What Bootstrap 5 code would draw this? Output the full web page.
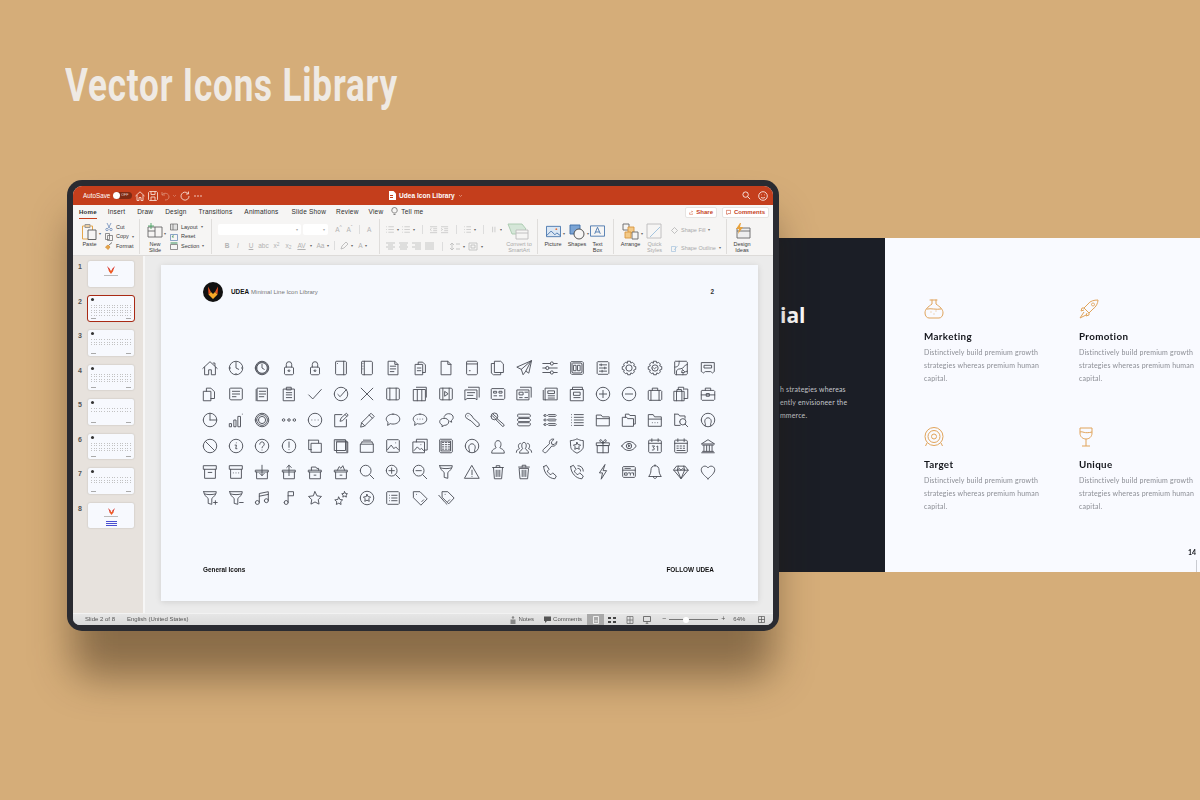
<!DOCTYPE html>
<html lang="en">
<head>
<meta charset="UTF-8">
<title>Vector Icons Library</title>
<link rel="stylesheet" href="https://cdn.jsdelivr.net/npm/bootstrap@5.3.0/dist/css/bootstrap.min.css">
<style>
html, body { margin: 0; height: 800px; overflow: hidden; }
body { background: #d5ad79; font-family: "Liberation Sans", Arial, sans-serif; color: #333; }
.stage { width: 1200px; height: 800px; position: relative; overflow: hidden; }
.headline { position: absolute; left: 65px; top: 55px; margin: 0; font-family: "Roboto", sans-serif; font-weight: 700; font-size: 47px; line-height: 60px; letter-spacing: 1.1px; color: #efeae4; white-space: nowrap; transform: scaleX(.746); transform-origin: left center; }

/* spacing helpers for the tightly packed office chrome */
.ml1 { margin-left: 1px; } .ml2 { margin-left: 2px; } .ml3 { margin-left: 3px; } .ml4 { margin-left: 4px; }
.ml5 { margin-left: 5px; } .ml6 { margin-left: 6px; } .ml7 { margin-left: 7px; } .ml8 { margin-left: 8px; }
.ml10 { margin-left: 10px; } .ml11 { margin-left: 11px; } .ml12 { margin-left: 12px; } .ml13 { margin-left: 13px; }
.w8 { width: 8px; } .w9 { width: 9px; } .w11 { width: 11px; } .w13 { width: 13px; } .w15 { width: 15px; }
.w16 { width: 16px; } .w17 { width: 17px; } .w18 { width: 18px; } .w19 { width: 19px; } .w22 { width: 22px; }

/* slide peeking out behind the tablet */
.backslide { position: absolute; left: 770px; top: 238px; width: 430px; height: 334px; display: flex; font-family: "Lato", "Open Sans", sans-serif; filter: blur(.25px); }
.back-dark { width: 115px; flex: none; background: #1b1e26; color: #fff; padding: 65px 0 0 10px; }
.back-dark h3 { font-size: 21px; font-weight: 700; line-height: 24px; margin: 0 0 56px; font-family: "Open Sans", sans-serif; }
.back-dark p { font-size: 6.9px; line-height: 13px; margin: 0; color: #c6c8cd; white-space: nowrap; letter-spacing: .2px; }
.back-light { flex: none; width: 315px; background: #f9faff; padding: 61px 0 0 39px; position: relative; display: grid; grid-template-columns: 155px 155px; grid-template-rows: 128px 128px; }
.feat svg { display: block; width: 20px; height: 20px; margin-bottom: 11px; }
.feat h4 { font-size: 9.8px; font-weight: 700; margin: 0 0 4px; color: #14161c; line-height: 12px; letter-spacing: .35px; }
.feat p { font-size: 7px; line-height: 13px; margin: 0; color: #8b8d94; width: 118px; letter-spacing: .2px; }
.pagenum { position: absolute; right: 4px; bottom: 15px; font-size: 7px; font-weight: 700; color: #14161c; }
.pagetick { position: absolute; right: 3px; bottom: 0; width: 1px; height: 12px; background: #c9cbd1; }

/* tablet */
.tablet-shade { position: absolute; left: 72px; top: 215px; width: 702px; height: 462px; border-radius: 20px; background: rgba(40,25,10,.44); filter: blur(20px); }
.tablet { position: absolute; left: 67px; top: 180px; width: 712px; height: 451px; background: #2a2b31; border-radius: 15px; padding: 6px; }
.screen { width: 700px; height: 439px; border-radius: 9px 9px 7px 7px; overflow: hidden; display: flex; flex-direction: column; background: #eaeaea; filter: blur(.25px); }
.titlebar { height: 19px; background: #c43e1c; color: #fff; font-size: 6.3px; position: relative; padding-left: 10px; flex: none; }
.titlebar svg { flex: none; }
.toggle-sw { width: 19px; height: 7px; border-radius: 4px; background: #7d2a14; position: relative; margin: 0 0 0 3px; font-size: 3.6px; line-height: 7px; padding-left: 8px; color: #eedbd4; }
.toggle-sw::before { content: ""; position: absolute; left: 0; top: 0; width: 7px; height: 7px; border-radius: 50%; background: #fff; }
.doc-title { position: absolute; left: 316px; top: 0; height: 19px; font-weight: 700; font-size: 6.6px; gap: 3px; }
.title-smile { margin: 0 5px 0 7px; }
.tabsrow { height: 13px; background: #f6f5f4; font-size: 6.5px; letter-spacing: .2px; position: relative; flex: none; padding-left: 6px; color: #2e2e2e; }
.tabitem { position: relative; white-space: nowrap; }
.tabitem.on { font-weight: 700; font-size: 6.1px; }
.tabitem.on::after { content: ""; position: absolute; left: 0; right: 0; bottom: -3px; height: 1px; background: #c43e1c; }
.topbtn { position: absolute; top: 2px; height: 11px; background: #fff; border: 1px solid #e6e4e2; border-radius: 2px; color: #c43e1c; font-weight: 700; font-size: 6px; letter-spacing: 0; padding: 0 3px; gap: 3px; }
.topshare { left: 612px; width: 32px; }
.topcomm { left: 649px; width: 47px; }
.ribbon { height: 38px; background: #f6f5f4; border-bottom: 1px solid #dddbd9; display: flex; flex: none; font-size: 5.5px; color: #3a3a3a; }
.rgroup { position: relative; height: 35px; margin-top: 1px; border-right: 1px solid #dfdddb; flex: none; display: flex; }
.g1 { width: 67px; padding-left: 8px; } .g2 { width: 72px; padding-left: 7px; } .g3 { width: 168px; padding: 5px 0 0 6px; }
.g4 { width: 158px; padding: 5px 0 0 6px; } .g5 { width: 76px; padding-left: 6px; } .g6 { width: 113px; padding-left: 7px; } .g7 { width: 46px; border: 0; padding-left: 4px; }
.rbig { display: flex; flex-direction: column; align-items: center; flex: none; text-align: center; line-height: 6px; padding-top: 4px; }
.rbig svg { margin-bottom: 1px; height: 17px; flex: none; }
.rsmall { display: flex; flex-direction: column; justify-content: space-between; height: 31px; padding-top: 4px; margin-left: 4px; width: 36px; }
.rsmall > div { display: flex; align-items: center; gap: 3px; white-space: nowrap; height: 8px; }
.rsmall.shapes { height: 33px; padding-top: 7px; width: auto; margin-left: 8px; }
.dim { color: #a9a9a9; }
.caret { color: #666; font-size: 4px; line-height: 1; }
.caret.big { margin: 13px 0 0 1px; }
.fieldbox { height: 11px; background: #fff; border-radius: 2px; flex: none; display: flex; justify-content: flex-end; align-items: center; padding-right: 3px; color: #aaa; font-size: 4px; }
.fontname { width: 83px; } .fontsize { width: 25px; margin-left: 2px; }
.fontrow { display: flex; align-items: center; color: #b2b2b2; font-size: 6.5px; }
.fontrow span { flex: none; text-align: center; }
.fontrow.lower { margin-top: 6px; padding-left: 5px; }
.vbar { width: 1px; height: 9px; background: #ddd; margin: 0 5px; flex: none; }
.paracol { width: 116px; flex: none; overflow: hidden; }
.para-row { height: 11px; gap: 3px; }
.para-row.lower { margin-top: 6px; }
.smartart { width: 34px; margin-top: -5px; }

.workarea { flex: 1; display: flex; min-height: 0; }
.thumbs { background: #e7e2dd; padding: 5px 0 0 0; flex: none; width: 70px; }
.thumbrow { height: 34.5px; display: flex; align-items: flex-start; font-size: 7px; font-weight: 700; color: #555; }
.thumbrow b { width: 15px; padding: 1px 0 0 5px; flex: none; font-weight: 700; }
.thumbbox { width: 46px; height: 25.5px; background: #f7f9fe; border-radius: 2px; box-shadow: 0 0 2px rgba(0,0,0,.2); display: flex; flex-direction: column; padding: 2px 3px; position: relative; overflow: hidden; }
.thumbbox.sel { outline: 1.5px solid #a92a14; border-radius: 2px; }
.tlogo { width: 3px; height: 3px; border-radius: 50%; background: #333; margin-bottom: 4px; flex: none; }
.tdots { height: 1px; margin-bottom: 1.6px; background: repeating-linear-gradient(90deg,#c2c2c2 0 1px,transparent 1px 2.6px); flex: none; }
.tfoot { margin-top: auto; height: 1px; background: linear-gradient(90deg,#aaa 0 5px,transparent 5px calc(100% - 5px),#aaa calc(100% - 5px)); flex: none; }
.tcenter { align-items: center; padding-top: 5px; }
.tcenter svg { flex: none; }
.tline { height: 1px; width: 14px; background: #bbb; margin-top: 1px; flex: none; }
.tblue { height: 1.2px; width: 11px; background: #4a4fd0; margin-top: 1px; flex: none; }

.canvasarea { flex: 1; background: #ebebeb; padding: 9px 15px 12px 16px; border-left: 2px solid #f6f6f6; }
.pageslide { width: 597px; height: 336px; background: #f6f9fe; box-shadow: 0 1px 6px rgba(0,0,0,.12); display: flex; flex-direction: column; padding: 17px 44px 26px 42px; font-size: 6.4px; }
.slidehead { height: 20px; }
.slidehead .brand { margin-left: 8px; font-weight: 700; color: #111; }
.slidehead .subbrand { margin-left: 2px; color: #777; font-size: 6px; }
.iconwall { display: grid; grid-template-columns: repeat(20, 26.2px); grid-auto-rows: 26px; margin: 53px 0 0 -6px; }
.iconwall svg { width: 18px; height: 18px; display: block; margin: 4px; }
.slidefoot { margin-top: auto; font-weight: 700; color: #111; font-size: 6.4px; }
.statusbar { height: 12px; background: linear-gradient(#e6e6e6,#dadada); font-size: 6px; color: #555; flex: none; display: flex; align-items: center; padding-left: 12px; border-top: 1px solid #f2f2f2; }
.viewbtn { width: 16px; height: 12px; display: flex; align-items: center; justify-content: center; flex: none; }
.viewbtn.on { background: #a9a9a9; width: 17px; }
.mt-note { margin-left: 322px; }
.zoomtrack { width: 49px; height: 1px; background: #777; margin: 0 3px; position: relative; }
.zoomknob { position: absolute; left: 14px; top: -2.5px; width: 6px; height: 6px; border-radius: 50%; background: #fff; }
.zoomsign { color: #555; font-size: 7px; }
</style>
</head>
<body>
<div class="stage">
  <h1 class="headline">Vector Icons Library</h1>

  <div class="backslide">
    <div class="back-dark">
      <h3>ial</h3>
      <p>h strategies whereas</p>
      <p>ently envisioneer the</p>
      <p>mmerce.</p>
    </div>
    <div class="back-light">
      <div class="feat">
        <svg viewBox="0 0 20 20" fill="none" stroke="#e0a35a" stroke-width="1" stroke-linecap="round"><path d="M6 1h7M8 1v4C4 8 1 10 1 14c0 3 2 5 4 5h10c2 0 4-2 4-5 0-4-3-6-7-9V1M3 10c4-1 9 1 14 0M7 13h.01M10 15h.01M12 12h.01"/></svg>
        <h4>Marketing</h4>
        <p>Distinctively build premium growth strategies whereas premium human capital.</p>
      </div>
      <div class="feat">
        <svg viewBox="0 0 20 20" fill="none" stroke="#e0a35a" stroke-width="1"><path d="M19 1c-4 0-8 1-10 4l-4 4 5 5 4-4c3-2 5-6 5-9zM5 9H3l-1 3 3-1M10 14v2l-3 1 1-3M5 13l-4 6 6-3M14 4a1.5 1.5 0 1 0 .01 0"/></svg>
        <h4>Promotion</h4>
        <p>Distinctively build premium growth strategies whereas premium human capital.</p>
      </div>
      <div class="feat">
        <svg viewBox="0 0 20 20" fill="none" stroke="#e0a35a" stroke-width="1"><circle cx="10" cy="9.5" r="9"/><circle cx="10" cy="9.5" r="6"/><circle cx="10" cy="9.5" r="2.5"/><path d="M3 16l-1.5 3M17 16l1.5 3"/></svg>
        <h4>Target</h4>
        <p>Distinctively build premium growth strategies whereas premium human capital.</p>
      </div>
      <div class="feat">
        <svg viewBox="0 0 20 20" fill="none" stroke="#e0a35a" stroke-width="1"><path d="M1 1h12v5c0 4-3 6-6 6s-6-2-6-6zM1 5c3-1 4 2 12 0M7 12v7M3 19h8"/></svg>
        <h4>Unique</h4>
        <p>Distinctively build premium growth strategies whereas premium human capital.</p>
      </div>
      <span class="pagenum">14</span>
      <span class="pagetick"></span>
    </div>
  </div>

  <div class="tablet-shade"></div>

  <div class="tablet">
    <div class="screen">
      <!-- title bar -->
      <div class="titlebar d-flex align-items-center">
        <span>AutoSave</span>
        <span class="toggle-sw">OFF</span>
        <svg class="ml3" width="10" height="10" viewBox="0 0 10 10" fill="none" stroke="#f6d9cf" stroke-width=".9"><path d="M.5 5L5 .8 9.5 5M2 4v5.5h2v-3h2v3h2V4"/></svg>
        <svg class="ml3" width="10" height="10" viewBox="0 0 10 10" fill="none" stroke="#f6d9cf" stroke-width=".9"><path d="M1.5.5h7l1 1v7l-1 1h-7l-1-1v-7zM3 .5v3h4v-3M3 9.5V6h4v3.5"/></svg>
        <svg class="ml3" width="10" height="10" viewBox="0 0 10 10" fill="none" stroke="#dc8a72" stroke-width=".9"><path d="M1 1v3h3M1 4c2-3 7-2 7 2 0 2-2 3-4 3"/></svg>
        <svg class="ml1" width="5" height="5" viewBox="0 0 5 5" fill="none" stroke="#dc8a72" stroke-width=".7"><path d="M1 2l1.5 1.5L4 2"/></svg>
        <svg class="ml3" width="10" height="10" viewBox="0 0 10 10" fill="none" stroke="#f6d9cf" stroke-width=".9"><path d="M8 2.5A4 4 0 1 0 9 5M8.5.5V3H6"/></svg>
        <svg class="ml4" width="8" height="8" viewBox="0 0 8 8" fill="#f6d9cf"><circle cx="1" cy="4" r=".8"/><circle cx="4" cy="4" r=".8"/><circle cx="7" cy="4" r=".8"/></svg>
        <div class="doc-title d-flex align-items-center">
          <svg width="7" height="9" viewBox="0 0 7 9" fill="#fff"><path d="M0 0h4.5L7 2.5V9H0z"/><path d="M1 4h3v1H1zM1 6h3v1H1z" fill="#c43e1c"/></svg>
          <span>Udea Icon Library</span>
          <svg width="5" height="5" viewBox="0 0 5 5" fill="none" stroke="#eeb9a8" stroke-width=".6"><path d="M1 2l1.5 1.5L4 2"/></svg>
        </div>
        <svg class="ms-auto" width="9" height="9" viewBox="0 0 10 10" fill="none" stroke="#fff" stroke-width=".9"><circle cx="4" cy="4" r="3"/><path d="M6.3 6.3L9 9"/></svg>
        <svg class="title-smile" width="10" height="10" viewBox="0 0 10 10" fill="none" stroke="#fff" stroke-width=".8"><circle cx="5" cy="5" r="4.3"/><path d="M3 6.3c1 1 3 1 4 0M3.3 3.8h.6M6.2 3.8h.6"/></svg>
      </div>

      <!-- tabs -->
      <div class="tabsrow d-flex align-items-center">
        <span class="tabitem on">Home</span>
        <span class="tabitem ml11">Insert</span>
        <span class="tabitem ml12">Draw</span>
        <span class="tabitem ml12">Design</span>
        <span class="tabitem ml12">Transitions</span>
        <span class="tabitem ml12">Animations</span>
        <span class="tabitem ml13">Slide Show</span>
        <span class="tabitem ml10">Review</span>
        <span class="tabitem ml10">View</span>
        <svg class="ml8" width="7" height="9" viewBox="0 0 7 9" fill="none" stroke="#555" stroke-width=".7"><path d="M2.3 6C1.5 5 .8 4.5.8 3.2a2.7 2.7 0 0 1 5.4 0C6.2 4.5 5.5 5 4.7 6zM2.5 7.5h2"/></svg>
        <span class="tabitem ml3">Tell me</span>
        <div class="topbtn topshare d-flex align-items-center">
          <svg width="7" height="7" viewBox="0 0 7 7" fill="none" stroke="#c43e1c" stroke-width=".7"><path d="M1 3.5v3h5V5M3 3.5C3 2.5 4 2 5.5 2M4.5.8l1.3 1.2-1.3 1.2"/></svg>Share
        </div>
        <div class="topbtn topcomm d-flex align-items-center">
          <svg width="7" height="7" viewBox="0 0 7 7" fill="none" stroke="#c43e1c" stroke-width=".8"><path d="M.5.5h6V5H3L1.5 6.5V5h-1z"/></svg>Comments
        </div>
      </div>

      <!-- ribbon -->
      <div class="ribbon">
        <div class="rgroup g1">
          <div class="rbig w17">
            <svg width="17" height="17" viewBox="0 0 17 17" fill="none" stroke-width="1"><path d="M1.5 3h10v13h-10z" stroke="#e5a64b"/><path d="M4 1.5h5v3H4z" stroke="#999"/><path d="M7 7h8v9.5H7z" stroke="#666" fill="#f6f5f4"/></svg>
            <span>Paste</span>
          </div>
          <span class="caret big">&#9662;</span>
          <div class="rsmall">
            <div><svg width="8" height="8" viewBox="0 0 8 8" fill="none" stroke="#5b7fb3" stroke-width=".7"><path d="M2 0l2.5 5M6 0L3.5 5"/><circle cx="2" cy="6.5" r="1.2"/><circle cx="6" cy="6.5" r="1.2"/></svg>Cut</div>
            <div><svg width="8" height="8" viewBox="0 0 8 8" fill="none" stroke="#666" stroke-width=".7"><path d="M.5.5h4v6h-4zM2.5 2.5h5v5h-5z"/></svg>Copy <span class="caret">&#9662;</span></div>
            <div><svg width="8" height="8" viewBox="0 0 8 8" fill="none" stroke="#555" stroke-width=".8"><path d="M7 .5L3.5 3.5"/><path d="M.5 5L3 3l2 2-2 2.5z" fill="#e5a64b" stroke="#d8923a"/></svg>Format</div>
          </div>
        </div>
        <div class="rgroup g2">
          <div class="rbig w16">
            <svg width="16" height="17" viewBox="0 0 16 17" fill="none" stroke="#666" stroke-width=".9"><path d="M1 4h14v10H1zM8 4v10M1 8h7"/><path d="M4 0v6M1 3h6" stroke="#4aa564"/></svg>
            <span>New<br>Slide</span>
          </div>
          <span class="caret big">&#9662;</span>
          <div class="rsmall">
            <div><svg width="8" height="8" viewBox="0 0 8 8" fill="#e2e2e2" stroke="#666" stroke-width=".7"><path d="M.5 1h7v6h-7zM3 1v6"/></svg>Layout <span class="caret">&#9662;</span></div>
            <div><svg width="8" height="8" viewBox="0 0 8 8" fill="none" stroke="#5b7fb3" stroke-width=".7"><path d="M.5 1.5h7v6h-7z"/><path d="M2 4l1.5-2M2 4h2" stroke="#3b8f5a"/></svg>Reset</div>
            <div><svg width="8" height="8" viewBox="0 0 8 8" fill="none" stroke="#666" stroke-width=".7"><path d="M.5 2.5h7v5h-7z"/><path d="M.5 1h7" stroke="#3b8f5a" stroke-width="1.2"/></svg>Section <span class="caret">&#9662;</span></div>
          </div>
        </div>
        <div class="rgroup g3 flex-column">
          <div class="d-flex align-items-center">
            <div class="fieldbox fontname">&#9662;</div>
            <div class="fieldbox fontsize">&#9662;</div>
            <div class="fontrow ml6"><span class="w9">A<sup>^</sup></span><span class="w9 ml2">A<sup>&#711;</sup></span><span class="vbar"></span><span class="ml2">A</span></div>
          </div>
          <div class="fontrow lower">
            <span class="w8 fw-bold">B</span><span class="w8 ml3 fst-italic">I</span><span class="w8 ml5 text-decoration-underline">U</span><span class="w11 ml3">abc</span><span class="w9 ml3">x<sup>2</sup></span><span class="w9 ml3">x<sub>2</sub></span><span class="w11 ml3 text-decoration-underline">AV</span><span class="caret ml3">&#9662;</span><span class="w13 ml2">Aa</span><span class="caret">&#9662;</span><span class="vbar"></span>
            <svg width="9" height="9" viewBox="0 0 9 9" fill="none" stroke="#b2b2b2" stroke-width=".8"><path d="M1 8l1-3 4-4 2 2-4 4z"/></svg><span class="caret ml2">&#9662;</span><span class="w9 ml3">A</span><span class="caret">&#9662;</span>
          </div>
        </div>
        <div class="rgroup g4">
          <div class="paracol">
            <div class="d-flex align-items-center para-row" id="paraTop"></div>
            <div class="d-flex align-items-center para-row lower" id="paraBot"></div>
          </div>
          <div class="rbig dim smartart">
            <svg width="24" height="17" viewBox="0 0 24 17" fill="none" stroke="#a8c9ae" stroke-width=".9"><path d="M1 1h14l4 5-4 5H5z" fill="#d5e6d8"/><path d="M9 7h12v9H9z" stroke="#bbb" fill="#f6f5f4"/><path d="M9 10h12" stroke="#bbb"/></svg>
            <span>Convert to<br>SmartArt</span>
          </div>
        </div>
        <div class="rgroup g5">
          <div class="rbig w18">
            <svg width="15" height="17" viewBox="0 0 16 17" fill="none" stroke-width=".9"><path d="M.5 3h15v11H.5z" stroke="#3d6da8" fill="#dbe7f4"/><path d="M.5 13l5-5 4 4 2-2 4 3" stroke="#3d6da8"/><circle cx="11" cy="6" r="1" fill="#e5713a" stroke="none"/></svg>
            <span>Picture</span>
          </div>
          <span class="caret big">&#9662;</span>
          <div class="rbig w18 ml3">
            <svg width="16" height="17" viewBox="0 0 16 17" fill="none" stroke-width=".9"><path d="M1 2h10v9H1z" stroke="#3d6da8" fill="#7ba4d4"/><circle cx="10" cy="11" r="5" stroke="#444" fill="#f6f5f4"/></svg>
            <span>Shapes</span>
          </div>
          <span class="caret big">&#9662;</span>
          <div class="rbig w15 ml1">
            <svg width="15" height="17" viewBox="0 0 16 17" fill="none" stroke="#3d6da8" stroke-width=".9"><path d="M.5 2.5h15v11H.5z"/><path d="M5 11l3-7 3 7M6 9h4"/></svg>
            <span>Text<br>Box</span>
          </div>
        </div>
        <div class="rgroup g6">
          <div class="rbig w19">
            <svg width="17" height="17" viewBox="0 0 17 17" fill="none" stroke-width=".9"><path d="M1 1h6v6H1z" stroke="#666"/><path d="M6 4h6v6H6z" stroke="#d9963e" fill="#f3c987"/><path d="M10 9h6v7h-6z" stroke="#666" fill="#f6f5f4"/><path d="M3 9h6v6H3z" stroke="#d9963e" fill="#f3c987"/></svg>
            <span>Arrange</span>
          </div>
          <span class="caret big">&#9662;</span>
          <div class="rbig dim w17 ml3">
            <svg width="17" height="17" viewBox="0 0 17 17" fill="none" stroke="#bbb" stroke-width=".9"><path d="M1 1h14v14H1z"/><path d="M4 14L14 4" stroke="#9cc0dc"/></svg>
            <span>Quick<br>Styles</span>
          </div>
          <div class="rsmall shapes dim">
            <div><svg width="7" height="7" viewBox="0 0 7 7" fill="none" stroke="#aaa" stroke-width=".7"><path d="M3.5.5l3 3-3 3-3-3z"/></svg>Shape Fill <span class="caret">&#9662;</span></div>
            <div><svg width="7" height="7" viewBox="0 0 7 7" fill="none" stroke="#a4c2dc" stroke-width=".7"><path d="M.5 1.5h4v5h-4zM3 5l3.5-4"/></svg>Shape Outline <span class="caret">&#9662;</span></div>
          </div>
        </div>
        <div class="rgroup g7">
          <div class="rbig w22">
            <svg width="17" height="17" viewBox="0 0 17 17" fill="none" stroke-width=".9"><path d="M3 5h13v10H3zM3 8h13" stroke="#666" fill="#eee"/><path d="M6 0L2 6h3L4 11l5-7H6l1-4z" fill="#e8a23c" stroke="none"/></svg>
            <span>Design<br>Ideas</span>
          </div>
        </div>
      </div>

      <div class="workarea">
        <div class="thumbs" id="thumbs"></div>
        <div class="canvasarea">
          <div class="pageslide">
            <div class="slidehead d-flex align-items-center">
              <svg width="20" height="20" viewBox="0 0 20 20"><circle cx="10" cy="10" r="10" fill="#111"/><path d="M5 4.5L8 10l-2.5 2.5z" fill="#e8501f"/><path d="M15 4.5L12 10l2.5 2.5z" fill="#e8501f"/><path d="M5.5 12.5L8 10l2 2 2-2 2.5 2.5L10 17z" fill="#f7a928"/></svg>
              <span class="brand">UDEA</span>
              <span class="subbrand">Minimal Line Icon Library</span>
              <span class="ms-auto fw-bold">2</span>
            </div>
            <div class="iconwall" id="iconwall"></div>
            <div class="slidefoot d-flex justify-content-between">
              <span>General Icons</span>
              <span>FOLLOW UDEA</span>
            </div>
          </div>
        </div>
      </div>

      <div class="statusbar">
        <span>Slide 2 of 8</span>
        <span class="ml12">English (United States)</span>
        <svg class="mt-note" width="6" height="8" viewBox="0 0 6 8" fill="#888"><circle cx="3" cy="1.5" r="1.2"/><path d="M.5 3.5h5V8h-5z"/></svg>
        <span class="ml2">Notes</span>
        <svg class="ml10" width="7" height="7" viewBox="0 0 7 7" fill="#555"><path d="M0 .5h7V5H3L1 7V5H0z"/></svg>
        <span class="ml2">Comments</span>
        <div class="viewbtn on ml5"><svg width="6" height="8" viewBox="0 0 6 8" fill="none" stroke="#fff" stroke-width=".8"><path d="M.5.5h5v7h-5zM1.5 5h3"/></svg></div>
        <div class="viewbtn"><svg width="8" height="8" viewBox="0 0 8 8" fill="#444"><path d="M0 1h3v2H0zM5 1h3v2H5zM0 5h3v2H0zM5 5h3v2H5z"/></svg></div>
        <div class="viewbtn ml2"><svg width="8" height="8" viewBox="0 0 8 8" fill="none" stroke="#666" stroke-width=".7"><path d="M1 .5h6v7H1zM1 4h6M4 .5v7"/></svg></div>
        <div class="viewbtn ml1"><svg width="8" height="8" viewBox="0 0 8 8" fill="none" stroke="#555" stroke-width=".8"><path d="M.5.5h7v5h-7zM4 5.5V8M2.5 8h3"/></svg></div>
        <span class="zoomsign ml7">&minus;</span>
        <div class="zoomtrack"><span class="zoomknob"></span></div>
        <span class="zoomsign">+</span>
        <span class="ml8">64%</span>
        <svg class="ml13" width="7" height="7" viewBox="0 0 7 7" fill="none" stroke="#555" stroke-width=".7"><path d="M.5.5h6v6h-6zM.5 3.5h6M3.5.5v6"/></svg>
      </div>
    </div>
  </div>
</div>

<script src="https://cdn.jsdelivr.net/npm/bootstrap@5.3.0/dist/js/bootstrap.bundle.min.js"></script>
<script>
// shorthand for the icon paths, all drawn in a 20x20 box
const C = (x, y, r) => `M${x - r} ${y}a${r} ${r} 0 1 0 ${2 * r} 0a${r} ${r} 0 1 0 ${-2 * r} 0`;
const R = (x, y, w, h) => `M${x + 1} ${y}h${w - 2}l1 1v${h - 2}l-1 1h${-(w - 2)}l-1-1v${-(h - 2)}z`;
const D = (x, y) => `M${x} ${y}h.01`;
const dots = (y, a = 7, b = 10, c = 13) => D(a, y) + D(b, y) + D(c, y);
const doc = 'M5 2.5h7l3.5 3.5v11.5H5zM12 2.5V6h3.5';
const lines3 = 'M7 8h6M7 11h6M7 14h4';
const lock = R(5, 9, 10, 8.5) + 'M7 9V6a3 3 0 0 1 6 0v3' + C(10, 13, 1);
const film = R(3, 3.5, 14, 13) + 'M6.5 3.5v13M13.5 3.5v13';
const archive = 'M3 3h14v4H3zM4 7v10h12V7';
const box = 'M3 8h14v2H3zM4 10v7.5h12V10';
const funnel = 'M3 3h14c0 3-3 6-5 7.5V17l-4-1v-5.5C6 9 3 6 3 3zM4 5.5c3 1 9 1 12 0';
const gear = C(10, 10, 3.5) + 'M8.5 2.5h3l.5 2 2-.8 2 2-.8 2 2.3.8v3l-2.3.8.8 2-2 2-2-.8-.5 2h-3l-.5-2-2 .8-2-2 .8-2-2.3-.8v-3l2.3-.8-.8-2 2-2 2 .8z';
const bullets = 'M0 1h1M3 1h7M0 4.5h1M3 4.5h7M0 8h1M3 8h7';
const bubble = 'M10 3.5c4.5 0 7.5 2.5 7.5 5.5s-3 5.5-7.5 5.5c-1 0-2-.1-3-.5l-3 2 .5-3.5C3 11.5 2.5 10 2.5 9c0-3 3-5.5 7.5-5.5z';
const userRing = C(10, 10, 7.5) + 'M7 16.5V14c-1-2-1-6 3-6.5 4 .5 4 4.5 3 6.5v2.5';
const starMid = 'M10 6l1.2 2.5 2.8.4-2 2 .5 2.8-2.5-1.3-2.5 1.3.5-2.8-2-2 2.8-.4z';
const phone = 'M3 4l3-1.5 3 4.5-2 2c1 2 2 3 4 4l2-2 4 3.5-1.5 3C9 17.5 3 11 3 4z';

const ICONS = [
  // row 1
  'M2 10.5l8-7.5 8 7.5M4 9v8.5h4.5V12h3v5.5H16V9M13.5 4.5h2v3',
  C(10, 10, 7.5) + 'M10 5v5l3 1.5M10 3.5v.5M10 16v.5M3.5 10H4M16 10h.5',
  C(10, 10, 7.5) + C(10, 10, 6.7) + C(10, 10, 5.9) + 'M10 6v4l2.5 1.5',
  lock, lock,
  R(4, 2.5, 12, 15) + 'M13 2.5v15M6 5h.01',
  R(4, 2.5, 12, 15) + 'M7 2.5v15M5.5 5h.01M5.5 8h.01M5.5 11h.01',
  doc + lines3,
  'M5 6h8v11.5H5zM8 6V3.5h5l3 3V15h-3M7 10h4M7 13h4',
  doc,
  R(4, 2.5, 12, 15) + 'M4 5.5h12M7 13h1',
  'M3 5h3V2.5h7l3 3V15h-3v2.5H5L3 16zM6 5v10h7',
  'M18 2L2 9l5 2.5 2 6 3-4 3 2zM18 2L7 11.5M18 2l-6 11.5',
  'M2 5h8M14 5h4M2 10h3M9 10h9M2 15h8M14 15h4' + C(12, 5, 1.8) + C(7, 10, 1.8) + C(12, 15, 1.8),
  R(3, 3, 14, 14) + R(4.5, 4.5, 11, 11) + 'M6.5 7H9v6H6.5zM11 7h2.5v6H11z',
  R(3.5, 3, 13, 14) + 'M6 6.5h8M6 10h8M6 13.5h8M8 5.5v2M12 9v2M9 12.5v2',
  gear,
  gear + 'M8.5 10l1 1 2-2',
  R(3, 2.5, 14, 15) + 'M3 9c4 0 5-2 5-6.5M17 6c-4 0-3 5-8 5s-4 4-4 6.5M12 17.5c0-3 2-3 5-4M12 12l2 2-1 1h-2z',
  'M3 4h14v10c-1 0-1 1.5-2 1.5s-1-1.5-2-1.5H7c-1 0-1 1.5-2 1.5S4 14 3 14zM6 7h8v3H6z',
  // row 2
  'M3 7h8v10.5H3zM6 7V3.5h5l4 4V15h-4',
  R(3, 3.5, 14, 13) + 'M6 7h8M6 10h8M6 13h4',
  'M5 3.5h11v14H5zM3.5 5v12.5M7 7h7M7 10h7M7 13h5',
  'M4 4.5h12v13H4zM7.5 2.5h5v3h-5zM7 8.5h6M7 11h6M7 14h6',
  'M3 11l4.5 4.5L17 5',
  C(10, 10, 7.5) + 'M6.5 10.5L9 13l7-8',
  'M3.5 3.5l13 13M16.5 3.5l-13 13',
  film,
  'M6 2.5h11v11M3 5h13v12.5H3zM7 5v12.5M12 5v12.5',
  film + 'M8.5 7.5v5l3.5-2.5z',
  'M6 2.5h12v11M2.5 5.5h13v11l-2-1.5h-9l-2 1.5zM5 8.5h8M5 11.5h6',
  R(2.5, 4, 15, 12) + 'M5.5 7h3v2h-3zM11.5 7h3v2h-3zM5.5 12h3M11.5 12h3',
  'M6 2.5h12v11M2.5 5.5h13v11h-13zM5 8h4v3H5zM11 8h3M5 14h3M11 14h3',
  'M5 3.5h13v13H5zM2.5 6v10.5H5M8 6.5h7v3H8zM8 12h7M8 14.5h7',
  'M3 5h14v12.5H3zM5 5V2.5h11V5M6.5 8h7v3.5h-7zM6.5 14h7',
  C(10, 10, 7.5) + 'M10 6v8M6 10h8',
  C(10, 10, 7.5) + 'M6 10h8',
  R(2.5, 6, 15, 11) + 'M7 6V3.5h6V6M5.5 6v11M14.5 6v11',
  'M2.5 7h11v10.5h-11zM5.5 7V5h5v2M7 5V2.5h6V5M14 4.5h3.5V15h-4M5 7v10.5M11 7v10.5',
  R(2.5, 6, 15, 11) + 'M7 6V3.5h6V6M2.5 11h15M8.5 9.5h3v3h-3z',
  // row 3
  C(10, 10, 7.5) + 'M10 10V2.5M10 10h7.5',
  'M3 14h2v3.5H3zM8 10h2v7.5H8zM12.5 6H15v11.5h-2.5zM17 3.5h.01',
  C(10, 10, 7.5) + C(10, 10, 6) + C(10, 10, 4),
  C(4, 10, 1.4) + C(10, 10, 1.4) + C(16, 10, 1.4),
  C(10, 10, 7.5) + dots(10, 6.5, 10, 13.5),
  'M16 9.5v8H3V4h8M9 11l1-3 6-5.5 2 2-6 6zM14.5 4l2 2',
  'M3 17.5L4 13 14.5 2.5 18 6 7.5 16.5zM4 13l3.5 3.5M12.5 4.5L16 8',
  bubble,
  bubble + dots(9),
  'M8 8c3 0 5 1.7 5 4s-2 4-5 4l-2.5 1.5.3-2C4 14.5 3 13.5 3 12c0-2.3 2-4 5-4zM8 6c1-2 3-3 5-3 3 0 5 2 5 4 0 1.5-.7 2.5-2 3.5l.3 2-2-1',
  // key
  'M3 7C1.5 4.5 4.5 1.5 7 3l3 2.5 1 2 7 6.5v2.5l-2.5 1L9 11l-2-1zM5.5 5.5h.01',
  C(6, 6, 3.8) + 'M9 8.5l8 7-1.5 2-8-8M3.5 5L7 8.5M4.5 3.5l4 3.5',
  R(3, 3.5, 14, 3.5) + R(3, 8.3, 14, 3.5) + R(3, 13, 14, 3.5),
  C(4.5, 5, 1.2) + C(4.5, 10, 1.2) + C(4.5, 15, 1.2) + R(7.5, 4, 9.5, 2) + R(7.5, 9, 9.5, 2) + R(7.5, 14, 9.5, 2),
  D(4, 4) + D(4, 7) + D(4, 10) + D(4, 13) + D(4, 16) + 'M7 4h10M7 7h10M7 10h10M7 13h10M7 16h10',
  'M3 4.5h5l1.5 2H17v10H3zM3 8.5h14',
  'M3 7h4.5l1 1.5H15V17H3zM6 7V3.5h4L11 5h6v9.5h-2',
  'M3 4h5l1.5 2.5H17V17H3zM3 9h14' + dots(13),
  'M3 3.5h4l1.5 2h6V8M3 3.5V16h6' + C(12, 12, 3.5) + 'M14.5 14.5l3 3',
  userRing,
  // row 4
  C(10, 10, 7.5) + 'M5 5l10 10',
  C(10, 10, 7.5) + 'M9 9h1.5l-.8 4H11M10.3 6.5h.01',
  C(10, 10, 7.5) + 'M7.5 8c0-3.5 5-3.5 5 0 0 2-2.5 2-2.5 4M10 14.5h.01',
  C(10, 10, 7.5) + 'M10 5.5v6M10 14h.01',
  'M3 3.5h11v3M3 3.5V14h3M6 7h11v10H6z',
  'M3 3h12v12H3zM5.5 5.5h12v12h-12zM4.5 4.5h12v12',
  'M3 8h14v9H3zM4.5 5.5h11M6 3.5h8M3 8l1.5-2.5M17 8l-1.5-2.5',
  R(3, 3, 14, 14) + 'M4 14l4-5 3 4 2-2 3 3M13 6.5h.01',
  'M6 5.5v-3h12v12h-3M2.5 5.5H15v12H2.5zM3.5 15L7 11l3 3 1.5-1.5L14 15M11 8.5h.01',
  R(3, 2.5, 14, 15) + [6, 8.5, 11, 13.5].map(y => `M6 ${y}h1.5M9.3 ${y}h1.5M12.5 ${y}h1.5`).join('') + 'M5 4.5h10v11H5z',
  userRing,
  'M3 17.5c0-4 3-4 5-5.5-2-2-2-8 2-8s4 6 2 8c2 1.5 5 1.5 5 5.5z',
  'M1.5 17c0-3 2-3 3.5-4-2-2-1.5-6 1-6M18.5 17c0-3-2-3-3.5-4 2-2 1.5-6-1-6M5 17.5c0-3 3-3 3.5-4.5-1.5-2-1.5-7 1.5-7s3 5 1.5 7c.5 1.5 3.5 1.5 3.5 4.5z',
  'M17.5 5.5l-3 3-2.5-.5-.5-2.5 3-3c-3-1-6 1.5-5 5L2.5 14c-1.5 2 1.5 4.5 3.5 3l6-7c3.5 1 6-2 5.5-4.5z',
  'M3 4c3 0 5-1 7-2 2 1 4 2 7 2v7c0 3-4 5.5-7 7-3-1.5-7-4-7-7z' + starMid,
  'M3 6.5h14v3H3zM4 9.5h12v8H4zM10 6.5v11M10 6.5C8 6.5 6 5 6.5 3.5S10 4 10 6.5zM10 6.5c2 0 4-1.5 3.5-3S10 4 10 6.5z',
  'M2 10c2-3.5 5-5 8-5s6 1.5 8 5c-2 3.5-5 5-8 5s-6-1.5-8-5z' + C(10, 10, 3) + 'M9.5 9v2l1.5-1z',
  R(3, 3.5, 14, 14) + 'M3 7h14M6.5 2v3M13.5 2v3M7 10h2.5L8 12c2 0 2 3-1 2.5M12 10.5l1-.5v5',
  R(3, 3.5, 14, 14) + 'M3 7h14M6.5 2v3M13.5 2v3M5.5 10H7M9 10h1.5M12.5 10H14M5.5 12.5H7M9 12.5h1.5M12.5 12.5H14M5.5 15h9',
  'M3 7.5L10 3l7 4.5zM4 9h12M5.5 9.5v6M8.5 9.5v6M11.5 9.5v6M14.5 9.5v6M4 16h12M3 17.5h14',
  // row 5
  archive + 'M8 10.5h4',
  archive + dots(11),
  box + 'M10 2.5V14M7.5 11.5L10 14l2.5-2.5',
  box + 'M10 14V2.5M7.5 5L10 2.5 12.5 5',
  box + 'M6 8V4.5h5L12 6h2v2M9 13.5h2',
  box + 'M6 8l2-4 2 2 2-3 2 5M9 13.5h2',
  C(8.5, 8.5, 6) + 'M13 13l4.5 4.5',
  C(8.5, 8.5, 6) + 'M13 13l4.5 4.5M8.5 5.5v6M5.5 8.5h6',
  C(8.5, 8.5, 6) + 'M13 13l4.5 4.5M5.5 8.5h6',
  funnel,
  'M10 3l8 14H2zM10 8v5M10 15h.01',
  'M4 5h12M8 5V3h4v2M5 5l1 12.5h8L15 5M8 8v7M10 8v7M12 8v7',
  'M5 6h10l-1 11.5H6zM4 4.5h12M8 4.5v-2h4v2M8 8v7M10 8v7M12 8v7',
  phone,
  phone + 'M11 6c2 0 3 1 3 3M11 3c3.5 0 6 2.5 6 6',
  'M12 2L6 11h3.5L8 18l6-9.5h-3.5z',
  R(3, 4, 14, 12) + 'M3 8h14M5.5 6h6M5.5 11H8v2.5H5.5zM9.5 11h2v2.5M13 11h2v2.5',
  'M10 3c3 0 4.5 2 4.5 5 0 3 1 5 2.5 7H3c1.5-2 2.5-4 2.5-7 0-3 1.5-5 4.5-5zM10 3V2M8 15c0 3 4 3 4 0',
  'M5.5 3.5h9L18 8l-8 9.5L2 8zM2 8h16M7 3.5L6 8l4 9.5L14 8l-1-4.5M6 8l2-2 2 2 2-2 2 2',
  'M10 17.5C6 14 2.5 11 2.5 7.5 2.5 5 4.5 3.5 6.5 3.5c1.5 0 2.7.8 3.5 2 .8-1.2 2-2 3.5-2 2 0 4 1.5 4 4 0 3.5-3.5 6.5-7.5 10z',
  // row 6
  funnel + 'M14 15h4M16 13v4',
  funnel + 'M14 15h4',
  'M7 15V5l10-2v10M7 8l10-2' + C(4.8, 15, 2.2) + C(14.8, 13, 2.2),
  'M9 15V3h6v4.5H9' + C(6.8, 15, 2.2),
  'M10 3l2.2 4.6 5 .7-3.6 3.5.9 5L10 14.4 5.5 16.8l.9-5-3.6-3.5 5-.7z',
  'M7.5 9l1.3 2.7 3 .4-2.2 2.1.5 3-2.6-1.4-2.7 1.4.5-3-2.2-2.1 3-.4zM14 3l1 2 2.2.3-1.6 1.5.4 2.2L14 8l-2 1 .4-2.2-1.6-1.5L13 5z',
  C(10, 10, 7.5) + starMid,
  R(3, 3, 14, 14) + D(6, 7) + D(6, 10) + D(6, 13) + 'M8.5 7h6M8.5 10h6M8.5 13h6',
  'M3 3h7l8 8-7 7-8-8zM6 6h.01M12 14l2-2',
  'M6 3h6l7 7-6 6.5-7-7zM9 6h.01M2 7l7 8 2 2M14 12l-2 2',
];

document.getElementById('iconwall').innerHTML = ICONS.map(d =>
  `<svg viewBox="0 0 20 20" fill="none" stroke="#50535b" stroke-width="1.05" stroke-linecap="round" stroke-linejoin="round"><path d="${d}"/></svg>`
).join('');

// disabled paragraph controls in the ribbon
const glyph = (d, w = 10) => `<svg width="${w}" height="9" viewBox="0 0 ${w} 9" fill="none" stroke="#bbb" stroke-width=".8"><path d="${d}"/></svg>`;
const caret = '<span class="caret dim">&#9662;</span>';
const bar = '<span class="vbar mx-1"></span>';
document.getElementById('paraTop').innerHTML =
  glyph(bullets) + caret + glyph(bullets) + caret + bar +
  glyph('M0 1h9M4 3.5h5M4 6h5M0 8.5h9M2 3L0 4.5 2 6') + glyph('M0 1h9M4 3.5h5M4 6h5M0 8.5h9M0 3l2 1.5L0 6') + bar +
  glyph(bullets) + caret + bar +
  glyph('M2 1v7M5 1v7', 7) + caret;
document.getElementById('paraBot').innerHTML =
  glyph('M0 1h9M2 3h5M0 5h9M2 7h5') + glyph('M0 1h9M1 3h7M0 5h9M1 7h7') + glyph('M0 1h9M3 3h6M0 5h9M3 7h6') + glyph('M0 1h9M0 3h9M0 5h9M0 7h9') + bar +
  glyph('M2 1v7M0 3l2-2 2 2M0 6l2 2 2-2M6 2h4M6 7h4') + caret +
  glyph('M1 1h8v7H1zM3 3h4v3H3z') + caret;

// thumbnails down the left
const fox = s => `<svg width="${s}" height="${s}" viewBox="0 0 10 10"><path d="M0 0l4 4-1 3zM10 0L6 4l1 3z" fill="#d9342b"/><path d="M2 6l1-2 2 2 2-2 1 2-3 4z" fill="#ee5a24"/></svg>`;
const rowsPerSlide = [0, 5, 3, 4, 2, 4, 3, 0];
document.getElementById('thumbs').innerHTML = rowsPerSlide.map((n, i) => {
  let inner;
  if (i === 0) inner = fox(8) + '<span class="tline"></span>';
  else if (i === 7) inner = fox(7) + '<span class="tline"></span><span class="tblue mt-1"></span><span class="tblue"></span><span class="tblue"></span>';
  else inner = '<span class="tlogo"></span>' + '<span class="tdots"></span>'.repeat(n) + '<span class="tfoot"></span>';
  const cls = (n === 0 ? ' tcenter' : '') + (i === 1 ? ' sel' : '');
  return `<div class="thumbrow"><b>${i + 1}</b><div class="thumbbox${cls}">${inner}</div></div>`;
}).join('');
</script>
</body>
</html>
